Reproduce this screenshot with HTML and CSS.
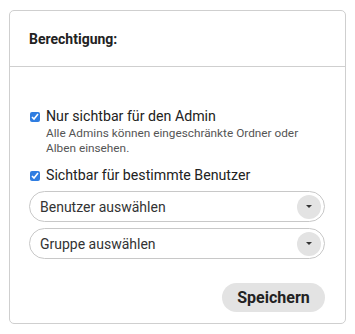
FILE: index.html
```html
<!DOCTYPE html>
<html lang="de">
<head>
  <meta charset="UTF-8" />
  <meta name="viewport" content="width=device-width, initial-scale=1" />
  <title>Berechtigung</title>
  <link rel="stylesheet" href="styles.css">
</head>
<body>
  <div class="card">
    <div class="card-header">
      <h2 class="card-title">Berechtigung:</h2>
    </div>
    <div class="card-body">
      <label class="option">
        <input type="checkbox" class="check" checked>
        <span class="option-text">
          <span class="option-label">Nur sichtbar für den Admin</span>
          <span class="option-hint">Alle Admins können eingeschränkte Ordner oder Alben einsehen.</span>
        </span>
      </label>
      <label class="option">
        <input type="checkbox" class="check" checked>
        <span class="option-text">
          <span class="option-label">Sichtbar für bestimmte Benutzer</span>
        </span>
      </label>

      <div class="select">
        <span class="select-text">Benutzer auswählen</span>
        <span class="select-btn"><span class="caret"></span></span>
      </div>
      <div class="select">
        <span class="select-text">Gruppe auswählen</span>
        <span class="select-btn"><span class="caret"></span></span>
      </div>

      <div class="actions">
        <button class="save-btn">Speichern</button>
      </div>
    </div>
  </div>
</body>
</html>
```

FILE: styles.css
```css
* {
  box-sizing: border-box;
  margin: 0;
  padding: 0;
}
html, body {
  background: #fff;
  color: #222;
  font-family: Roboto, "Noto Sans", sans-serif;
}
body {
  padding: 10px 9px 10px 9px;
}
.card {
  border: 1px solid #cfcfcf;
  border-radius: 5px;
  width: 337px;
  height: 314px;
}
.card-header {
  height: 56px;
  padding: 0 19px;
  display: flex;
  align-items: center;
  border-bottom: 1px solid #cfcfcf;
}
.card-title {
  font-size: 14px;
  font-weight: 700;
  color: #222;
}
.card-body {
  padding: 40px 20px 0 19px;
}
.option {
  display: flex;
  align-items: flex-start;
  gap: 6px;
  margin-bottom: 7px;
}
.check {
  width: 10px;
  height: 10px;
  margin: 5px 0 0 1px;
  accent-color: #2f7de1;
  flex: none;
}
.option-text {
  display: flex;
  flex-direction: column;
}
.option-label {
  font-size: 14.2px;
  line-height: 18px;
  color: #222;
}
.option-hint {
  font-size: 11.8px;
  line-height: 15px;
  color: #555;
  margin-top: 1px;
  margin-bottom: 3px;
  max-width: 270px;
}
.select {
  display: flex;
  align-items: center;
  justify-content: space-between;
  height: 31px;
  border: 1px solid #c8c8c8;
  border-radius: 16px;
  padding: 0 3px 0 10px;
  margin-bottom: 6px;
}
.select-text {
  font-size: 14px;
  color: #333;
}
.select-btn {
  width: 24px;
  height: 24px;
  border-radius: 50%;
  background: #e3e3e3;
  display: flex;
  align-items: center;
  justify-content: center;
}
.caret {
  width: 0;
  height: 0;
  border-left: 3px solid transparent;
  border-right: 3px solid transparent;
  border-top: 3px solid #333;
}
.actions {
  display: flex;
  justify-content: flex-end;
  margin-top: 24px;
}
.save-btn {
  font-family: Roboto, "Noto Sans", sans-serif;
  font-size: 16px;
  font-weight: 700;
  color: #222;
  background: #e3e3e3;
  border: none;
  border-radius: 15px;
  height: 29px;
  width: 103px;
}
```
